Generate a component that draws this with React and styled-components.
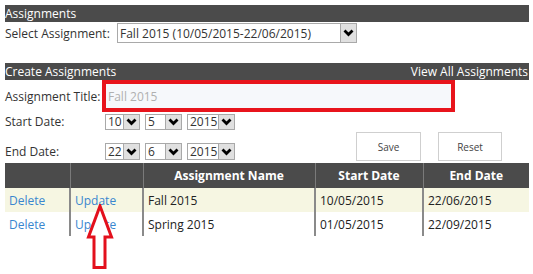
import React from "react";
import styled, { createGlobalStyle } from "styled-components";

const GlobalStyle = createGlobalStyle`
  html, body {
    margin: 0;
    padding: 0;
    background: #ffffff;
  }
  body {
    font-family: "Open Sans", "Noto Sans", sans-serif;
    font-size: 12px;
    color: #333333;
  }
`;

const assignments = [
  { name: "Fall 2015", start: "10/05/2015", end: "22/06/2015" },
  { name: "Spring 2015", start: "01/05/2015", end: "22/09/2015" },
];

function Chevron() {
  return (
    <svg width="11" height="8" viewBox="0 0 11 8">
      <path d="M1.5 1.5 L5.5 5.5 L9.5 1.5" fill="none" stroke="#000" strokeWidth="2.8" />
    </svg>
  );
}

function Dropdown({ value, width, height }) {
  return (
    <Select $width={width} $height={height}>
      <SelectText>{value}</SelectText>
      <SelectButton>
        <Chevron />
      </SelectButton>
    </Select>
  );
}

function App() {
  return (
    <Page>
      <GlobalStyle />
      <SectionBar>
        <span>Assignments</span>
      </SectionBar>
      <PickRow>
        <Label $width={112}>Select Assignment:</Label>
        <Dropdown value="Fall 2015 (10/05/2015-22/06/2015)" width={240} height={20} />
      </PickRow>

      <SectionBar $gap>
        <span>Create Assignments</span>
        <span>View All Assignments</span>
      </SectionBar>

      <TitleRow>
        <Label $width={97}>Assignment Title:</Label>
        <Highlight>
          <TitleInput placeholder="Fall 2015" />
        </Highlight>
      </TitleRow>

      <DateArea>
        <DateRows>
          <DateRow>
            <Label $width={100}>Start Date:</Label>
            <Dropdown value="10" width={35} height={16} />
            <Dropdown value="5" width={37} height={16} />
            <Dropdown value="2015" width={48} height={16} />
          </DateRow>
          <DateRow $top={13}>
            <Label $width={100}>End Date:</Label>
            <Dropdown value="22" width={35} height={17} />
            <Dropdown value="6" width={37} height={17} />
            <Dropdown value="2015" width={48} height={17} />
          </DateRow>
        </DateRows>
        <Buttons>
          <Button $width={65}>Save</Button>
          <Button $width={64}>Reset</Button>
        </Buttons>
      </DateArea>

      <TableWrap>
        <Table>
          <colgroup>
            <col style={{ width: 65 }} />
            <col style={{ width: 73 }} />
            <col style={{ width: 172 }} />
            <col style={{ width: 108 }} />
            <col style={{ width: 106 }} />
          </colgroup>
          <thead>
            <tr>
              <Th></Th>
              <Th></Th>
              <Th>Assignment Name</Th>
              <Th>Start Date</Th>
              <Th>End Date</Th>
            </tr>
          </thead>
          <tbody>
            {assignments.map((a, i) => (
              <Row key={a.name} $alt={i === 0}>
                <Td>
                  <Link>Delete</Link>
                </Td>
                <Td>
                  <Link>Update</Link>
                </Td>
                <Td>{a.name}</Td>
                <Td>{a.start}</Td>
                <Td>{a.end}</Td>
              </Row>
            ))}
          </tbody>
        </Table>
        <Arrow width="28" height="66" viewBox="0 0 28 66">
          <path
            d="M14 2 L25.5 33 L19 33 L19 63.5 L8 63.5 L8 33 L2.5 33 Z"
            fill="#ffffff"
            stroke="#e3101c"
            strokeWidth="3"
            strokeLinejoin="miter"
          />
        </Arrow>
      </TableWrap>
    </Page>
  );
}

export default App;

const Page = styled.div`
  width: 533px;
  height: 274px;
  padding: 5px 4px 0 5px;
  box-sizing: border-box;
  display: flex;
  flex-direction: column;
  overflow: hidden;
`;

const SectionBar = styled.div`
  height: 17px;
  margin-top: ${(p) => (p.$gap ? "20px" : "0")};
  background: #4b4b4b;
  color: #ffffff;
  display: flex;
  align-items: center;
  justify-content: space-between;
  font-size: 12px;
  line-height: 17px;
  padding-right: 1px;
`;

const PickRow = styled.div`
  display: flex;
  align-items: center;
  height: 20px;
  margin-top: 1px;
`;

const Label = styled.div`
  width: ${(p) => p.$width}px;
  flex-shrink: 0;
  color: #333333;
  white-space: nowrap;
  font-size: 12px;
`;

const Select = styled.div`
  width: ${(p) => p.$width}px;
  height: ${(p) => p.$height}px;
  box-sizing: border-box;
  border: 1px solid #a9a9a9;
  background: #ffffff;
  display: flex;
  align-items: stretch;
  margin-right: 5px;
`;

const SelectText = styled.div`
  flex: 1;
  display: flex;
  align-items: center;
  padding-left: 2px;
  color: #333333;
  font-size: 12px;
  white-space: nowrap;
  overflow: hidden;
`;

const SelectButton = styled.div`
  width: 15px;
  flex-shrink: 0;
  background: #e0e0e0;
  border-left: 1px solid #a9a9a9;
  display: flex;
  align-items: center;
  justify-content: center;
`;

const TitleRow = styled.div`
  display: flex;
  align-items: center;
  height: 32px;
`;

const Highlight = styled.div`
  width: 353px;
  height: 32px;
  box-sizing: border-box;
  border: 4px solid #e8141c;
  background: #f6f8fb;
  display: flex;
  align-items: center;
`;

const TitleInput = styled.input`
  width: 100%;
  height: 100%;
  box-sizing: border-box;
  border: none;
  outline: none;
  background: transparent;
  padding: 0 2px;
  font-family: "Open Sans", "Noto Sans", sans-serif;
  font-size: 12px;
  &::placeholder {
    color: #b0b0b0;
  }
`;

const DateArea = styled.div`
  display: flex;
  height: 51px;
`;

const DateRows = styled.div`
  display: flex;
  flex-direction: column;
`;

const DateRow = styled.div`
  display: flex;
  align-items: center;
  margin-top: ${(p) => (p.$top !== undefined ? p.$top : 1)}px;
`;

const Buttons = styled.div`
  display: flex;
  gap: 17px;
  margin-left: 116px;
  margin-top: 20px;
`;

const Button = styled.button`
  width: ${(p) => p.$width}px;
  height: 29px;
  background: #ffffff;
  border: 1px solid #cfcfcf;
  color: #444444;
  font-family: "Open Sans", "Noto Sans", sans-serif;
  font-size: 10px;
  padding: 0;
`;

const TableWrap = styled.div`
  position: relative;
`;

const Table = styled.table`
  width: 524px;
  border-collapse: collapse;
  table-layout: fixed;
  font-size: 12px;
`;

const Th = styled.th`
  height: 25px;
  padding: 0;
  background: #4b4b4b;
  color: #ffffff;
  font-weight: bold;
  text-align: center;
  border-left: 1px solid #7a7a7a;
  &:first-child {
    border-left: none;
  }
`;

const Row = styled.tr`
  background: ${(p) => (p.$alt ? "#f6f6e2" : "#ffffff")};
`;

const Td = styled.td`
  height: 24px;
  padding: 0 0 0 4px;
  color: #222222;
  white-space: nowrap;
  border-left: 2px solid #8a8a8a;
  &:first-child {
    border-left: none;
  }
`;

const Link = styled.span`
  color: #3a86cf;
`;

const Arrow = styled.svg`
  position: absolute;
  left: 81px;
  top: 41px;
`;
